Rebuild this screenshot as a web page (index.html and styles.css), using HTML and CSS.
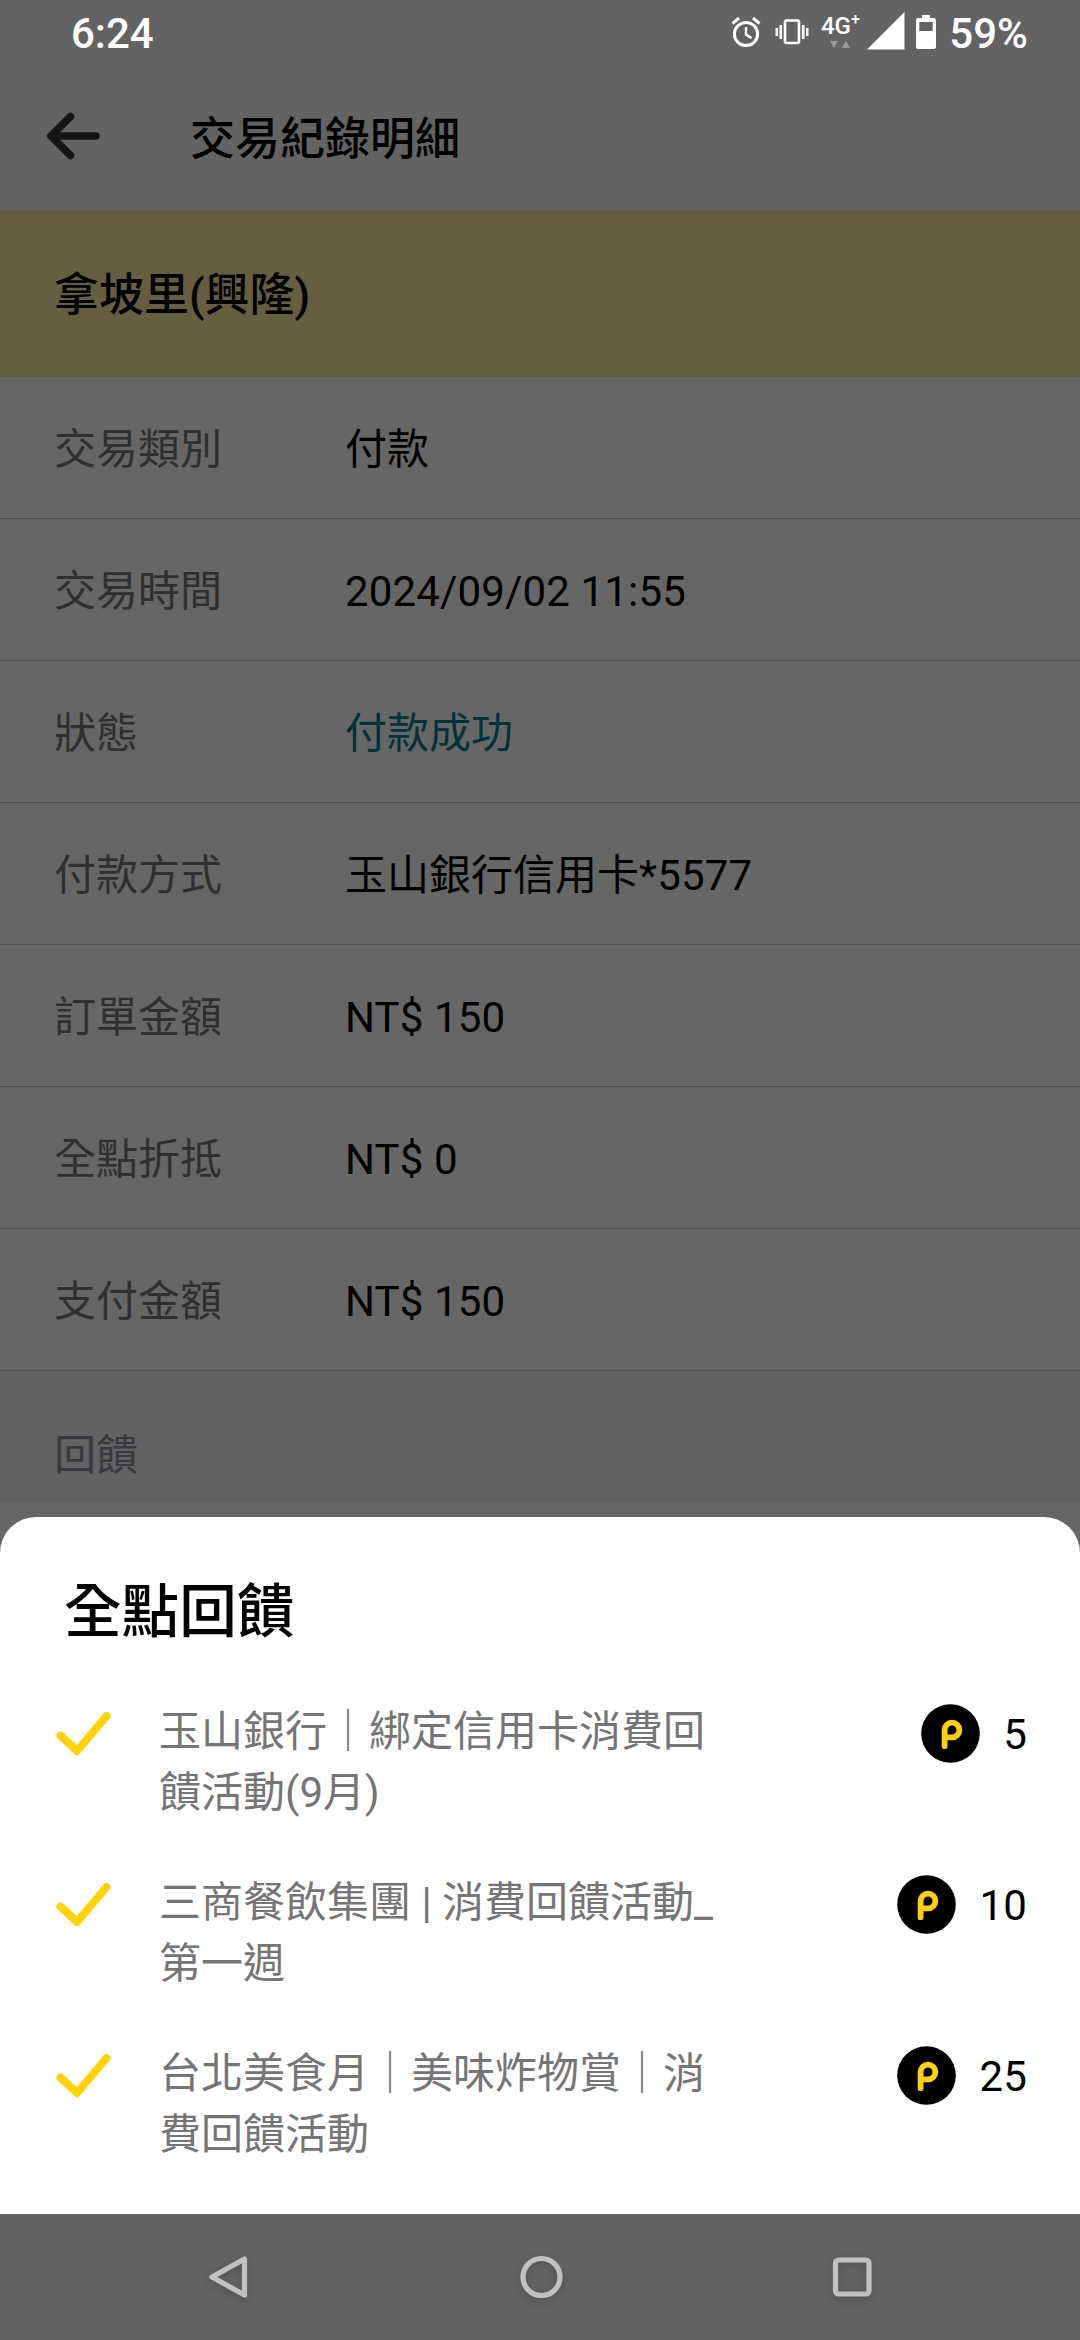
FILE: index.html
```html
<!DOCTYPE html>
<html lang="zh-Hant">
<head>
    <meta charset="UTF-8">
    <meta name="viewport" content="width=device-width, initial-scale=1.0">
    <title>交易紀錄明細</title>
    <link rel="stylesheet" href="styles.css">
</head>
<body>
    <div class="screen">
        <div class="status-bar">
            <span class="clock">6:24</span>
            <div class="status-icons">
                <svg class="alarm" width="30" height="32" viewBox="0 0 30 32" fill="none" stroke="#fff" stroke-width="3">
                    <circle cx="15" cy="18" r="11.6"/>
                    <path d="M15 11v7.5l5.5 3.5" stroke-width="2.4"/>
                    <path d="M1.5 7.5l6.5-5.5M28.5 7.5l-6.500-5.5"/>
                </svg>
                <svg class="vibrate" width="34" height="26" viewBox="0 0 34 26" fill="none" stroke="#fff" stroke-width="2.6">
                    <rect x="10" y="1.5" width="14" height="22.5" rx="1.5"/>
                    <path d="M5.800 6v14M1.8 9v8M28.200 6v14M32.200 9v8"/>
                </svg>
                <div class="network">
                    <span class="network-type">4G<sup>+</sup></span>
                    <svg width="20" height="8" viewBox="0 0 20 8" fill="#9a9a9a">
                        <path d="M0 0h8L4 7zM12 7h8L16 0z"/>
                    </svg>
                </div>
                <svg class="signal" width="38" height="38" viewBox="0 0 38 38"><path d="M0 37.5L37.5 0v37.5z" fill="#fff"/></svg>
                <svg class="battery" width="20" height="34" viewBox="0 0 20 34">
                    <path d="M6 0h8v3h4a2 2 0 0 1 2 2v27a2 2 0 0 1-2 2H2a2 2 0 0 1-2-2V5a2 2 0 0 1 2-2h4z" fill="#fff"/>
                    <path d="M3.300 7h13.400v9H3.300z" fill="#636363"/>
                </svg>
                <span class="percent">59%</span>
            </div>
        </div>

        <div class="app-bar">
            <svg width="54" height="48" viewBox="0 0 54 48" fill="none" stroke="#151515" stroke-width="7.5" stroke-linecap="round" stroke-linejoin="round">
                <path d="M49 24H4M23.5 4.5L4 24l19.5 19.5"/>
            </svg>
            <h1>交易紀錄明細</h1>
        </div>

        <div class="store">拿坡里(興隆)</div>

        <div class="row"><span class="label">交易類別</span><span>付款</span></div>
        <div class="row"><span class="label">交易時間</span><span class="latin">2024/09/02 11:55</span></div>
        <div class="row"><span class="label">狀態</span><span class="success">付款成功</span></div>
        <div class="row"><span class="label">付款方式</span><span>玉山銀行信用卡<span class="latin">*5577</span></span></div>
        <div class="row"><span class="label">訂單金額</span><span class="latin">NT$ 150</span></div>
        <div class="row"><span class="label">全點折抵</span><span class="latin">NT$ 0</span></div>
        <div class="row"><span class="label">支付金額</span><span class="latin">NT$ 150</span></div>

        <div class="section">回饋</div>

        <div class="bottom">
            <div class="sheet">
                <h2>全點回饋</h2>
                <div class="reward">
                    <svg class="check" width="56" height="46" viewBox="0 0 56 46"><path d="M4.5 24.5L21 40 50.5 5"/></svg>
                    <p>玉山銀行｜綁定信用卡消費回<br>饋活動(9月)</p>
                    <svg class="coin" width="59" height="59" viewBox="0 0 59 59">
                        <circle cx="29.5" cy="29.5" r="29.3"/>
                        <path d="M23.6 42.2V26a7.4 7.4 0 1 1 7.4 7.4h-7.4"/>
                    </svg>
                    <span class="points">5</span>
                </div>
                <div class="reward">
                    <svg class="check" width="56" height="46" viewBox="0 0 56 46"><path d="M4.5 24.5L21 40 50.5 5"/></svg>
                    <p>三商餐飲集團 | 消費回饋活動_<br>第一週</p>
                    <svg class="coin" width="59" height="59" viewBox="0 0 59 59">
                        <circle cx="29.5" cy="29.5" r="29.3"/>
                        <path d="M23.6 42.2V26a7.4 7.4 0 1 1 7.4 7.4h-7.4"/>
                    </svg>
                    <span class="points">10</span>
                </div>
                <div class="reward">
                    <svg class="check" width="56" height="46" viewBox="0 0 56 46"><path d="M4.5 24.5L21 40 50.5 5"/></svg>
                    <p>台北美食月｜美味炸物賞｜消<br>費回饋活動</p>
                    <svg class="coin" width="59" height="59" viewBox="0 0 59 59">
                        <circle cx="29.5" cy="29.5" r="29.3"/>
                        <path d="M23.6 42.2V26a7.4 7.4 0 1 1 7.4 7.4h-7.4"/>
                    </svg>
                    <span class="points">25</span>
                </div>
            </div>
            <div class="nav-bar">
                <svg width="44" height="44" viewBox="0 0 44 44"><path d="M37.5 4v36L5 22z"/></svg>
                <svg width="44" height="44" viewBox="0 0 44 44"><circle cx="22.5" cy="22" r="18.5"/></svg>
                <svg width="44" height="44" viewBox="0 0 44 44"><rect x="5.5" y="5" width="33.5" height="34" rx="3"/></svg>
            </div>
        </div>
    </div>
</body>
</html>
```

FILE: styles.css
```css
* {
    box-sizing: border-box;
}
body {
    margin: 0;
    font-family: Roboto, "Noto Sans CJK TC", sans-serif;
    font-size: 42px;
    background-color: #666666;
    color: #000;
}
h1, h2, p {
    margin: 0;
}
svg {
    display: block;
    flex: none;
}
.screen {
    position: relative;
    width: 1080px;
    height: 2340px;
    overflow: hidden;
}
.status-bar {
    display: flex;
    justify-content: space-between;
    height: 66px;
    padding: 0 52px 0 71px;
    background-color: #636363;
    color: #fff;
    font-weight: 500;
    line-height: 67px;
}
.status-icons {
    display: flex;
    align-items: center;
}
.alarm {
    margin-right: 14px;
    margin-bottom: 3px;
}
.vibrate {
    margin-right: 12px;
    margin-bottom: 3px;
}
.network {
    display: flex;
    flex-direction: column;
    align-items: center;
    width: 38px;
    gap: 4px;
    margin-right: 8px;
    margin-bottom: 3px;
}
.network-type {
    font-size: 24px;
    line-height: 22px;
    height: 22px;
    white-space: nowrap;
}
.network-type sup {
    font-size: 16px;
    line-height: 0;
}
.signal {
    margin-right: 11px;
    margin-bottom: 4px;
}
.battery {
    margin-right: 13px;
    margin-bottom: 3px;
}
.app-bar {
    display: flex;
    align-items: center;
    gap: 89px;
    height: 144px;
    padding: 0 47px;
    padding-bottom: 5px;
    background-color: #636363;
}
.app-bar h1 {
    font-size: 45px;
    font-weight: 500;
}
.store {
    display: flex;
    align-items: center;
    height: 167px;
    padding: 0 54px 4px;
    background-color: #665e40;
    font-size: 45px;
    font-weight: 500;
}
.row {
    display: flex;
    align-items: center;
    height: 142px;
    padding: 4px 54px 0;
    border-bottom: 1px solid #525356;
    line-height: 61px;
}
.label {
    width: 291px;
    color: #2f2f2f;
}
.latin {
    letter-spacing: 0.15px;
}
.success {
    color: #003338;
}
.section {
    display: flex;
    align-items: center;
    height: 131px;
    padding: 29px 54px 0;
    background-color: #626262;
    color: #38393e;
}

/* reward sheet over the page */
.bottom {
    position: absolute;
    left: 0;
    right: 0;
    bottom: 0;
}
.sheet {
    height: 697px;
    padding: 56px 53px 0 54px;
    background-color: #fff;
    border-radius: 36px 36px 0 0;
}
.sheet h2 {
    padding-left: 10px;
    margin-bottom: 45px;
    font-size: 57.6px;
    font-weight: 500;
    line-height: 80px;
}
.reward {
    display: flex;
    align-items: flex-start;
    height: 171px;
}
.reward p {
    flex: 1;
    padding-top: 3px;
    color: #757575;
    line-height: 61px;
}
.check {
    margin: 13px 47px 0 2px;
    fill: none;
    stroke: #ffd20a;
    stroke-width: 8;
    stroke-linecap: round;
    stroke-linejoin: round;
}
.coin {
    margin: 6px 23px 0 0;
}
.coin path {
    fill: none;
    stroke: #facf14;
    stroke-width: 5.8;
    stroke-linecap: round;
}
.points {
    line-height: 74px;
    letter-spacing: 0.2px;
}
.nav-bar {
    display: flex;
    justify-content: space-between;
    align-items: center;
    height: 126px;
    padding: 0 206px 0 207px;
    background-color: #636363;
}
.nav-bar svg {
    fill: none;
    stroke: #c1c1c1;
    stroke-width: 5.2;
    stroke-linejoin: round;
    overflow: visible;
    filter: drop-shadow(0 3px 4px rgba(0, 0, 0, 0.2));
}
```
